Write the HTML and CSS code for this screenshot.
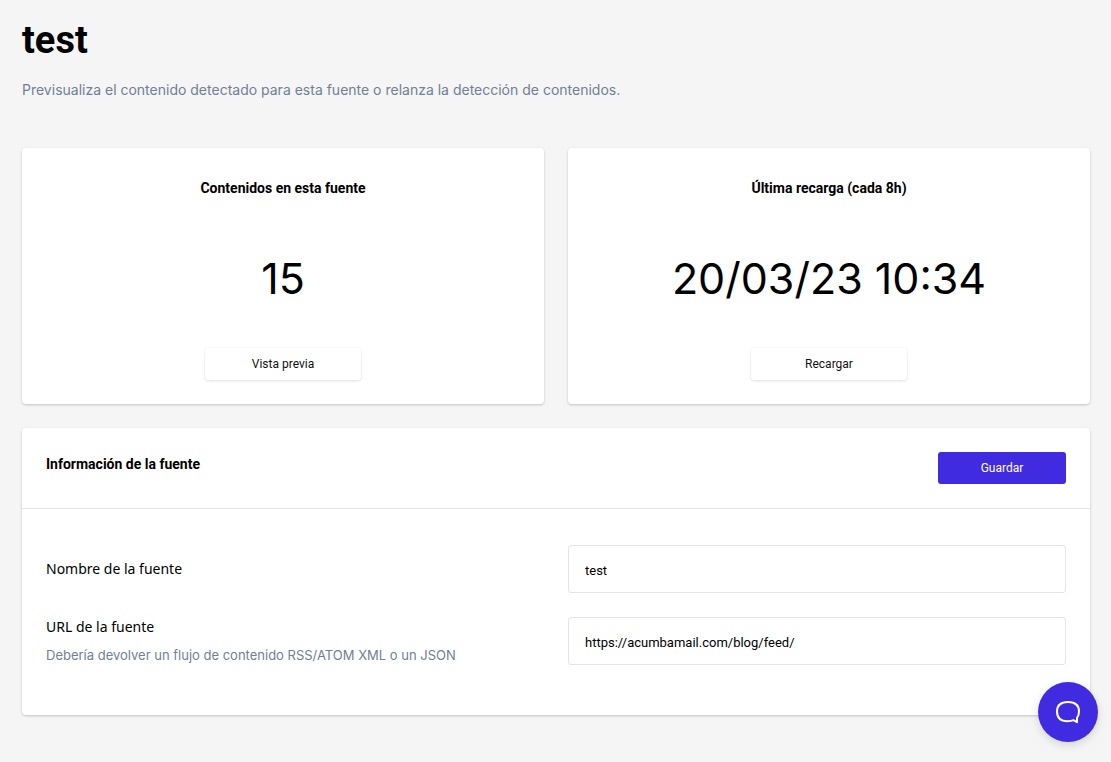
FILE: index.html
```html
<!DOCTYPE html>
<html lang="es">
<head>
<meta charset="utf-8">
<meta name="viewport" content="width=device-width, initial-scale=1">
<title>test</title>
<link rel="stylesheet" href="styles.css">
</head>
<body>
<main class="page">
  <header class="page-header">
    <h1 class="page-title">test</h1>
    <p class="page-subtitle">Previsualiza el contenido detectado para esta fuente o relanza la detección de contenidos.</p>
  </header>
  <div class="stats">
    <section class="card stat">
      <h2 class="card-title">Contenidos en esta fuente</h2>
      <p class="stat-value">15</p>
      <button class="button button-light" type="button">Vista previa</button>
    </section>
    <section class="card stat">
      <h2 class="card-title">Última recarga (cada 8h)</h2>
      <p class="stat-value">20/03/23 10:34</p>
      <button class="button button-light" type="button">Recargar</button>
    </section>
  </div>
  <form class="card">
    <div class="form-header">
      <h2 class="card-title">Información de la fuente</h2>
      <button class="button button-primary" type="button">Guardar</button>
    </div>
    <div class="form-body">
      <div class="field">
        <label class="field-label" for="name">Nombre de la fuente</label>
        <input class="field-input" id="name" type="text" value="test">
      </div>
      <div class="field">
        <div>
          <label class="field-label" for="url">URL de la fuente</label>
          <p class="field-hint" id="url-hint">Debería devolver un flujo de contenido RSS/ATOM XML o un JSON</p>
        </div>
        <input class="field-input" id="url" type="text" value="https://acumbamail.com/blog/feed/" aria-describedby="url-hint">
      </div>
    </div>
  </form>
</main>
<button class="chat" type="button" aria-label="Chat">
  <svg width="26" height="24" viewBox="0 0 26 24" fill="none" stroke="#fff" stroke-width="2" stroke-linejoin="round" aria-hidden="true">
    <path d="M18.5 20.2C16.800 21 15 21.200 12.500 21.200C5.500 21.200 2 17.500 2 11.500C2 5.500 6 2 13 2C20 2 24 5.500 24 11.500C24 14.300 23.300 16.300 22 17.800V22.200Z"/>
  </svg>
</button>
</body>
</html>
```

FILE: styles.css
```css
* {
  box-sizing: border-box;
}

body {
  margin: 0;
  background: #f5f5f5;
  color: #000;
  font-family: "Noto Sans", sans-serif;
  font-size: 14px;
  line-height: 24px;
}

h1, h2, p {
  margin: 0;
}

.page {
  padding: 16px 21px 47px 22px;
}

.page-header {
  margin-bottom: 46px;
}

.page-title {
  margin-bottom: 14px;
  font-family: Roboto, sans-serif;
  font-size: 38px;
  line-height: 48px;
}

.page-subtitle {
  color: #718096;
  font-family: Inter, sans-serif;
}

.card {
  background: #fff;
  border-radius: 4px;
  box-shadow: 0 1px 3px rgba(0, 0, 0, 0.14), 0 1px 2px rgba(0, 0, 0, 0.08);
}

.card-title {
  font-family: Roboto, sans-serif;
  font-size: 14px;
  line-height: 24px;
}

.stats {
  display: grid;
  grid-template-columns: 1fr 1fr;
  gap: 24px;
  margin-bottom: 24px;
}

.stat {
  display: flex;
  flex-direction: column;
  align-items: center;
  padding: 28px 24px 24px;
}

.stat-value {
  margin: 48px 0 40px;
  font-family: Inter, sans-serif;
  font-size: 43px;
  line-height: 60px;
}

.button {
  height: 32px;
  padding: 0 16px;
  border: 0;
  border-radius: 3px;
  font-family: Roboto, sans-serif;
  font-size: 12px;
  line-height: 32px;
}

.button-light {
  width: 156px;
  background: #fff;
  color: #111;
  box-shadow: 0 1px 3px rgba(0, 0, 0, 0.12), 0 0 1px rgba(0, 0, 0, 0.08);
}

.button-primary {
  width: 128px;
  background: #402be0;
  color: #fff;
}

.form-header {
  display: flex;
  justify-content: space-between;
  padding: 24px;
  border-bottom: 1px solid #e2e5e8;
}

.form-body {
  display: grid;
  gap: 24px;
  padding: 36px 24px 50px;
}

.field {
  display: grid;
  grid-template-columns: 1fr 1fr;
  gap: 24px;
  align-items: center;
}

.field-label {
  display: block;
  line-height: 20px;
}

.field-hint {
  padding-top: 8px;
  color: #718096;
  font-family: Inter, sans-serif;
  font-size: 13px;
  line-height: 20px;
}

.field-input {
  width: 100%;
  height: 48px;
  padding: 2px 16px 0;
  border: 1px solid #e2e5e8;
  border-radius: 3px;
  background: #fff;
  color: #000;
  font-family: Roboto, sans-serif;
  font-size: 13px;
}

.chat {
  position: fixed;
  right: 13px;
  bottom: 20px;
  display: grid;
  place-items: center;
  width: 60px;
  height: 60px;
  padding: 0;
  border: 0;
  border-radius: 50%;
  background: #402be0;
  box-shadow: 0 3px 10px rgba(0, 0, 0, 0.14);
}
```
